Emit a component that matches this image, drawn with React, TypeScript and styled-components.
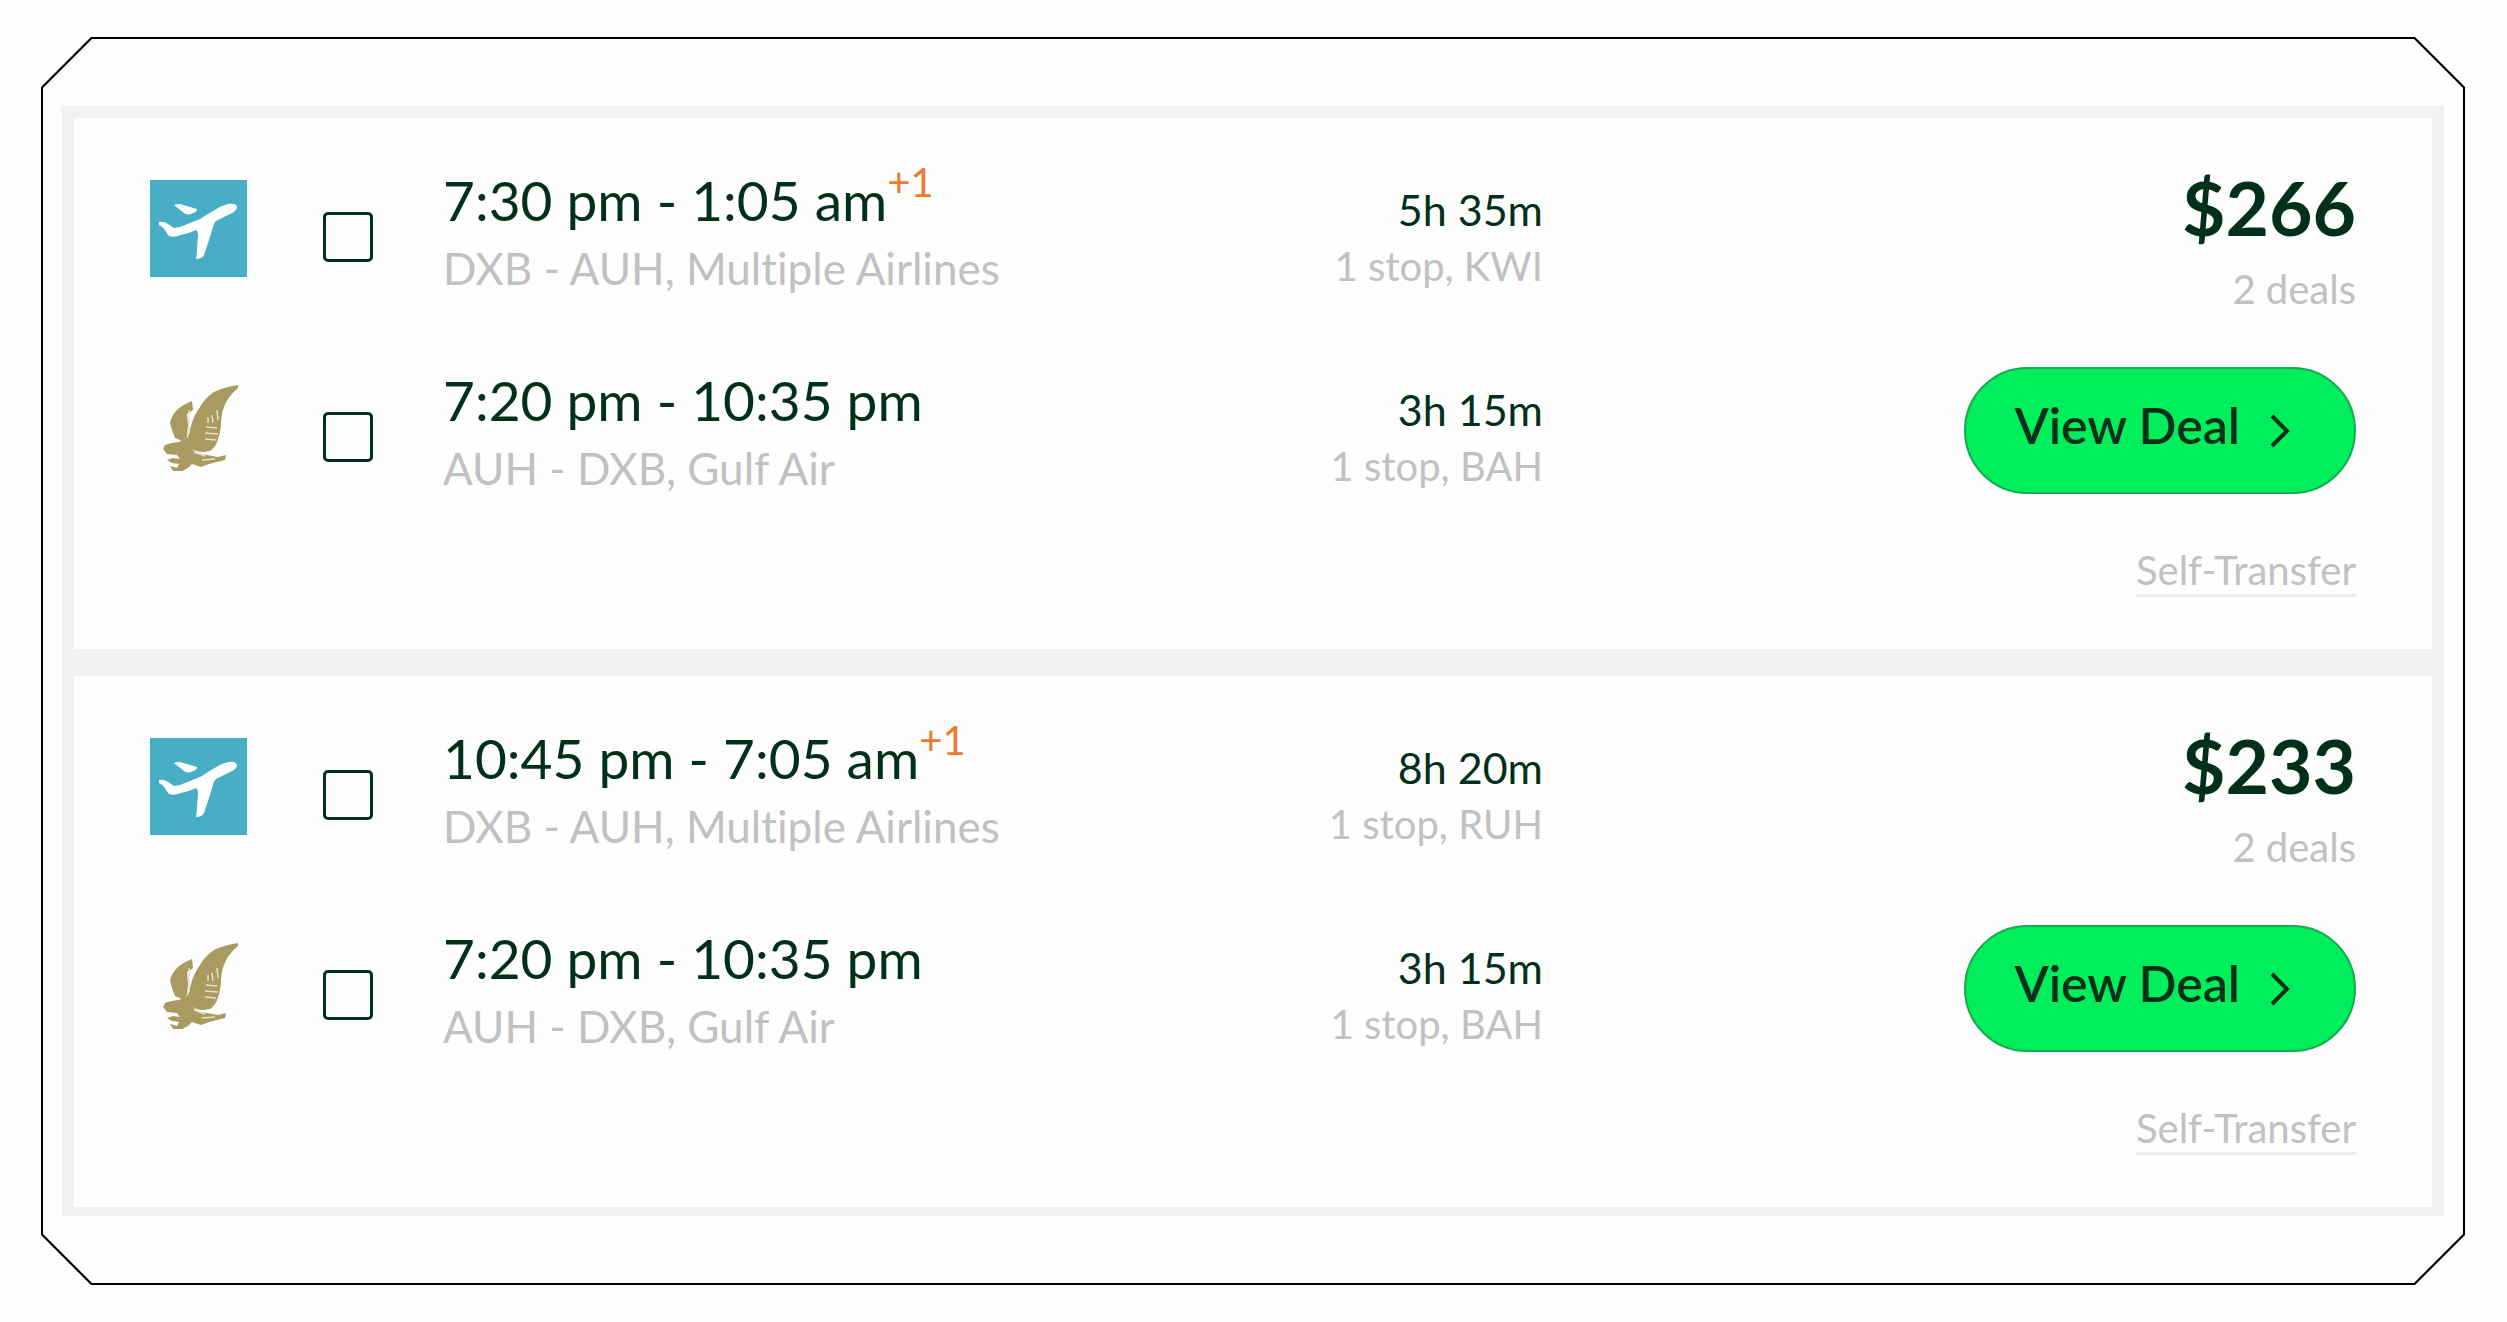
import React from "react";
import styled, { createGlobalStyle } from "styled-components";

const ink = "#00301a";
const muted = "#c1c1c1";

const GlobalStyle = createGlobalStyle`
  *, *::before, *::after { box-sizing: border-box; }
  body {
    margin: 0;
    background: #fefefe;
    color: ${ink};
    font-family: Lato, "Liberation Sans", sans-serif;
    font-variant-ligatures: none;
  }
`;

const bevel = (cut: number) => `polygon(
  ${cut}px 0, calc(100% - ${cut}px) 0, 100% ${cut}px, 100% calc(100% - ${cut}px),
  calc(100% - ${cut}px) 100%, ${cut}px 100%, 0 calc(100% - ${cut}px), 0 ${cut}px
)`;

const Page = styled.main`
  padding: 37px 42px 37px 41px;
`;

const Frame = styled.div`
  padding: 2px;
  background: #000;
  clip-path: ${bevel(50)};
`;

const FrameBody = styled.div`
  padding: 67px 19px;
  background: #fefefe;
  clip-path: ${bevel(49)};
`;

const Results = styled.section`
  display: flex;
  flex-direction: column;
  gap: 27px;
  padding: 12px 12px 9px;
  background: #f1f1f1;
`;

const Card = styled.article`
  display: grid;
  grid-template-columns: 1393fr 813fr;
  padding: 44px 76px 52px;
  background: #fefefe;
`;

const Legs = styled.div`
  display: flex;
  flex-direction: column;
  gap: 68px;
`;

const Leg = styled.div`
  display: flex;
  align-items: center;
`;

const Logo = styled.svg`
  width: 97px;
  height: 97px;
  flex: none;
`;

const Pick = styled.label`
  display: flex;
  padding-top: 18px;
  margin: 0 70px 0 76px;
`;

const Checkbox = styled.input`
  appearance: none;
  width: 50px;
  height: 50px;
  margin: 0;
  border: 3px solid ${ink};
  border-radius: 5px;
  background: #fdfdfd;
  &:checked { background: ${ink}; }
`;

const Schedule = styled.div`
  flex: 1;
`;

const Times = styled.div`
  font-size: 55px;
  line-height: 76px;
  margin-bottom: 4px;
  white-space: nowrap;
`;

const DayShift = styled.sup`
  font-size: 40px;
  line-height: 0;
  vertical-align: 24px;
  color: #ed7a2f;
`;

const Route = styled.div`
  font-size: 44px;
  line-height: 52px;
  color: ${muted};
`;

const Travel = styled.div`
  align-self: flex-end;
  text-align: right;
  line-height: 56px;
`;

const Duration = styled.div`
  font-size: 43px;
`;

const Stops = styled.div`
  font-size: 40px;
  color: ${muted};
`;

const Offer = styled.div`
  display: flex;
  flex-direction: column;
  align-items: flex-end;
`;

const Price = styled.div`
  font-size: 75px;
  font-weight: 700;
  line-height: 90px;
  margin-bottom: 12px;
`;

const Deals = styled.div`
  font-size: 40px;
  line-height: 50px;
  color: ${muted};
`;

const DealButton = styled.button`
  display: flex;
  align-items: center;
  gap: 30px;
  height: 127px;
  margin: 53px 0 52px;
  padding: 0 64px 0 48px;
  border: 2px solid #14ac4e;
  border-radius: 64px;
  background: #00ee5c;
  color: ${ink};
  font: 600 50px/60px Lato, "Liberation Sans", sans-serif;
`;

const DealLabel = styled.span`
  padding-bottom: 12px;
`;

const Chevron = styled.svg`
  width: 20px;
  height: 34px;
`;

const TransferLink = styled.a`
  font-size: 40px;
  line-height: 48px;
  color: ${muted};
  text-decoration: none;
  border-bottom: 3px solid #ebebeb;
`;

function PlaneLogo() {
  return (
    <Logo viewBox="0 0 97 97" role="img" aria-label="Multiple Airlines">
      <path fill="#47aec6" d="M0 0H97V97H0Z" />
      <path
        fill="#fff"
        d="M9 42Q14 41 18 44L24 48Q29 48 35 45L50 39L63 31Q72 25 79 24Q86 23 87 27Q87 31 80 34L66 41Q64 43 63 47L59 60L54 75Q52 79 46 79Q47 74 47 68L48 56Q48 51 46 50Q40 53 31 55Q24 58 19 56Q17 54 15 50Q12 46 9 45ZM24 25Q29 23 33 25L47 29Q47 32 43 33Q38 36 34 33Z"
      />
    </Logo>
  );
}

function FalconLogo() {
  return (
    <Logo viewBox="0 0 97 97" role="img" aria-label="Gulf Air">
      <g fill="#a99a60">
        <path d="M88 5Q74 7 64 12Q55 18 50 27Q44 35 41 46L38 57Q33 60 29 62Q20 63 15 65L13 69L17 74L27 75L30 79L23 78L17 80L22 83L29 84L27 88L20 86L23 91L32 91L38 88L42 84L51 87L59 84L67 82L75 80L76 75L68 77L57 75Q48 75 41 68Q46 72 53 72L60 71Q66 67 68 59Q71 51 71 41Q72 32 74 27Q78 16 88 8Z" />
        <path d="M42 21Q32 25 27 30Q21 36 20 43L22 50L25 58L32 61L37 57L38 45L37 34L43 30Z" />
      </g>
      <g fill="none" stroke="#e6e0ca" strokeWidth="1.5">
        <path d="M56 47L67 48M55 53L68 54M55 59L66 60M58 37V43M62 35L63 43M67 30L68 40" />
        <path d="M39 30V54M44 72L55 76M52 80L65 79" />
      </g>
    </Logo>
  );
}

interface LegData {
  airline: "multiple" | "gulf";
  times: string;
  shift?: string;
  route: string;
  duration: string;
  stops: string;
}

interface Trip {
  price: string;
  legs: LegData[];
}

const inbound: LegData = {
  airline: "gulf",
  times: "7:20 pm - 10:35 pm",
  route: "AUH - DXB, Gulf Air",
  duration: "3h 15m",
  stops: "1 stop, BAH",
};

const trips: Trip[] = [
  {
    price: "$266",
    legs: [
      {
        airline: "multiple",
        times: "7:30 pm - 1:05 am",
        shift: "+1",
        route: "DXB - AUH, Multiple Airlines",
        duration: "5h 35m",
        stops: "1 stop, KWI",
      },
      inbound,
    ],
  },
  {
    price: "$233",
    legs: [
      {
        airline: "multiple",
        times: "10:45 pm - 7:05 am",
        shift: "+1",
        route: "DXB - AUH, Multiple Airlines",
        duration: "8h 20m",
        stops: "1 stop, RUH",
      },
      inbound,
    ],
  },
];

function TripCard({ trip }: { trip: Trip }) {
  return (
    <Card>
      <Legs>
        {trip.legs.map((leg) => (
          <Leg key={leg.route}>
            {leg.airline === "gulf" ? <FalconLogo /> : <PlaneLogo />}
            <Pick>
              <Checkbox type="checkbox" aria-label={`${leg.times}, ${leg.route}`} />
            </Pick>
            <Schedule>
              <Times>
                {leg.times}
                {leg.shift && <DayShift>{leg.shift}</DayShift>}
              </Times>
              <Route>{leg.route}</Route>
            </Schedule>
            <Travel>
              <Duration>{leg.duration}</Duration>
              <Stops>{leg.stops}</Stops>
            </Travel>
          </Leg>
        ))}
      </Legs>
      <Offer>
        <Price>{trip.price}</Price>
        <Deals>2 deals</Deals>
        <DealButton type="button">
          <DealLabel>View Deal</DealLabel>
          <Chevron viewBox="0 0 20 34" aria-hidden="true">
            <path d="M2 2L17 17L2 32" fill="none" stroke={ink} strokeWidth="4" />
          </Chevron>
        </DealButton>
        <TransferLink href="#self-transfer">Self-Transfer</TransferLink>
      </Offer>
    </Card>
  );
}

export default function App() {
  return (
    <>
      <GlobalStyle />
      <Page>
        <Frame>
          <FrameBody>
            <Results>
              {trips.map((trip) => (
                <TripCard key={trip.price} trip={trip} />
              ))}
            </Results>
          </FrameBody>
        </Frame>
      </Page>
    </>
  );
}
